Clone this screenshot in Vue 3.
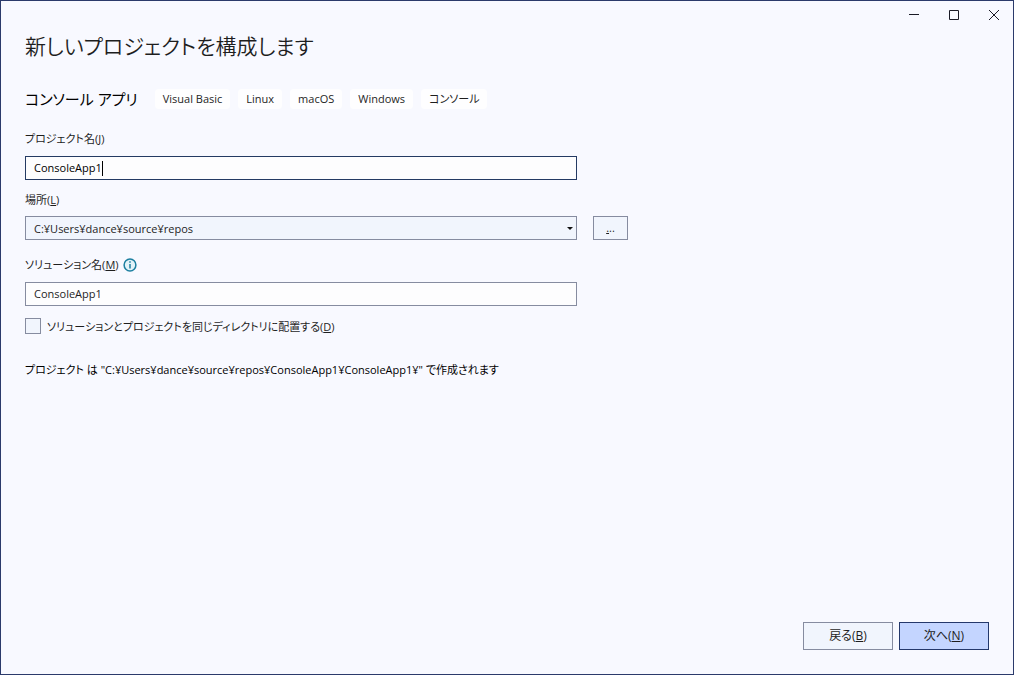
<script setup>
import { computed, ref } from 'vue'

const tags = ['Visual Basic', 'Linux', 'macOS', 'Windows', 'コンソール']
const projectName = ref('ConsoleApp1')
const solutionName = ref('ConsoleApp1')
const location = ref('C:¥Users¥dance¥source¥repos')
const sameDirectory = ref(false)

const targetPath = computed(() =>
  sameDirectory.value
    ? `${location.value}¥${projectName.value}¥`
    : `${location.value}¥${solutionName.value}¥${projectName.value}¥`
)
</script>

<template>
  <div class="window">
    <header class="titlebar">
      <button class="caption" type="button" aria-label="最小化">
        <svg width="12" height="12" viewBox="0 0 12 12"><path d="M1 5.5h10" /></svg>
      </button>
      <button class="caption" type="button" aria-label="最大化">
        <svg width="12" height="12" viewBox="0 0 12 12"><path d="M1.5 1.5h9v9h-9z" /></svg>
      </button>
      <button class="caption" type="button" aria-label="閉じる">
        <svg class="close" width="12" height="12" viewBox="0 0 12 12"><path d="M1 1l10 10M11 1L1 11" /></svg>
      </button>
    </header>

    <form class="page" @submit.prevent>
      <h1>新しいプロジェクトを構成します</h1>

      <div class="template">
        <h2>コンソール アプリ</h2>
        <ul class="tags">
          <li v-for="tag in tags" :key="tag">{{ tag }}</li>
        </ul>
      </div>

      <div class="field project">
        <label for="project">プロジェクト名(<u>J</u>)</label>
        <div class="control">
          <input id="project" v-model="projectName" class="box active" type="text" accesskey="j" />
          <span class="caret"></span>
        </div>
      </div>

      <div class="field place">
        <label for="location">場所(<u>L</u>)</label>
        <div class="row">
          <div class="control">
            <select id="location" v-model="location" class="box" accesskey="l">
              <option>C:¥Users¥dance¥source¥repos</option>
            </select>
            <svg class="arrow" width="6" height="3" viewBox="0 0 6 3"><path d="M0 0h6L3 3z" /></svg>
          </div>
          <button class="browse" type="button" aria-label="参照"><u>.</u>..</button>
        </div>
      </div>

      <div class="field solution">
        <div class="row">
          <label for="solution">ソリューション名(<u>M</u>)</label>
          <svg class="info" width="14" height="14" viewBox="0 0 14 14">
            <circle cx="7" cy="7" r="5.9" />
            <path d="M7 6v4.5M7 3.3v1.5" />
          </svg>
        </div>
        <div class="control">
          <input id="solution" v-model="solutionName" class="box" type="text" accesskey="m" />
        </div>
      </div>

      <div class="check">
        <input id="same" v-model="sameDirectory" type="checkbox" accesskey="d" />
        <label for="same">ソリューションとプロジェクトを同じディレクトリに配置する(<u>D</u>)</label>
      </div>

      <p class="summary">プロジェクト は "{{ targetPath }}" で作成されます</p>

      <footer>
        <button type="button" accesskey="b">戻る(<u>B</u>)</button>
        <button class="primary" type="submit" accesskey="n">次へ(<u>N</u>)</button>
      </footer>
    </form>
  </div>
</template>

<style>
body {
  margin: 0;
  background: #f8f9ff;
}
</style>

<style scoped>
.window {
  display: flex;
  flex-direction: column;
  box-sizing: border-box;
  min-height: 100vh;
  border: 1px solid #2b3a6b;
  background: #f8f9ff;
  color: #1e1e1e;
  font: 11px/18px "Open Sans", "Noto Sans CJK JP", sans-serif;
  font-feature-settings: "palt";
}

button,
input,
select {
  box-sizing: border-box;
  margin: 0;
  color: inherit;
  font: inherit;
  font-feature-settings: inherit;
}

u {
  text-underline-offset: 1px;
}

.titlebar {
  display: flex;
  justify-content: flex-end;
  height: 28px;
  margin-right: -1px;
}

.caption {
  display: flex;
  align-items: center;
  justify-content: center;
  width: 40px;
  padding: 0;
  border: 0;
  background: none;
}

.caption svg {
  fill: none;
  stroke: #1a1a26;
}

.page {
  display: flex;
  flex: 1;
  flex-direction: column;
  padding: 0 24px 24px;
}

h1 {
  margin: 1px 0 0;
  font-size: 21px;
  font-weight: 350;
  line-height: 32px;
}

.template {
  display: flex;
  align-items: center;
  gap: 17px;
  margin-top: 25px;
}

h2 {
  margin: 0;
  color: #000;
  font-size: 15px;
  font-weight: 400;
  line-height: 24px;
}

.tags {
  display: flex;
  gap: 8px;
  margin: 0;
  padding: 0;
  list-style: none;
}

.tags li {
  padding: 0 8px;
  border-radius: 4px;
  background: #fefeff;
  line-height: 20px;
}

.field {
  display: flex;
  flex-direction: column;
}

.project {
  gap: 8px;
  margin-top: 19px;
}

.place {
  gap: 7px;
  margin-top: 11px;
}

.solution {
  gap: 8px;
  margin-top: 16px;
}

.row {
  display: flex;
  align-items: center;
}

.place .row {
  gap: 16px;
}

.solution .row {
  gap: 4px;
}

.control {
  position: relative;
  flex: 0 1 552px;
  width: 100%;
  max-width: 552px;
}

.solution .control,
.project .control {
  flex: none;
}

.box {
  display: block;
  width: 100%;
  height: 24px;
  padding: 0 8px 2px;
  border: 1px solid #868ca0;
  border-radius: 0;
  outline: 0;
  background: #fdfdfe;
}

select.box {
  padding: 2px 8px 0;
  appearance: none;
  background: #f1f5fd;
}

.box.active {
  border-color: #243a63;
  color: #000;
}

.caret {
  position: absolute;
  top: 5px;
  left: 77px;
  width: 1px;
  height: 15px;
  background: #000;
}

.arrow {
  position: absolute;
  top: 11px;
  right: 4px;
  fill: #111;
  pointer-events: none;
}

.browse {
  width: 35px;
  height: 24px;
  padding: 0;
  border: 1px solid #868ca0;
  background: #f1f5fd;
}

.info {
  fill: #e2f3f9;
  stroke: #1c7fa0;
  stroke-width: 1.5;
}

.check {
  display: flex;
  align-items: flex-start;
  gap: 6px;
  margin-top: 12px;
}

.check input {
  width: 16px;
  height: 16px;
  border: 1px solid #868ca0;
  background: #f1f5fd;
  appearance: none;
}

.summary {
  margin: 25px 0 0;
  color: #000;
}

footer {
  display: flex;
  justify-content: flex-end;
  gap: 6px;
  margin-top: auto;
}

footer button {
  width: 90px;
  height: 28px;
  padding: 0;
  border: 1px solid #868ca0;
  background: #f1f5fd;
  font-size: 12px;
}

footer .primary {
  border-color: #24386b;
  background: #c4d5ff;
}
</style>
